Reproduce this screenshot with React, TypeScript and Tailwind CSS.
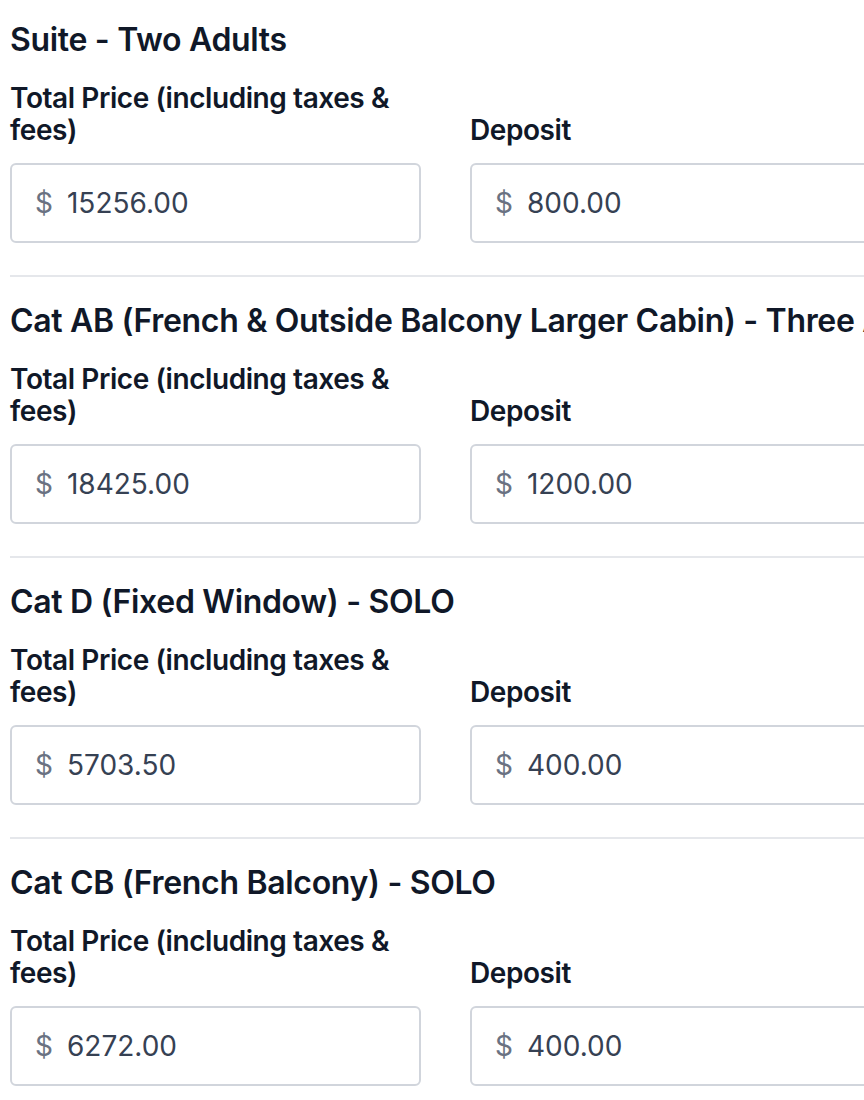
import React from 'react';

interface CabinPrice {
    id: string;
    title: string;
    total: string;
    deposit: string;
}

const cabins: CabinPrice[] = [
    { id: 'suite-two', title: 'Suite - Two Adults', total: '15256.00', deposit: '800.00' },
    { id: 'cat-ab-three', title: 'Cat AB (French & Outside Balcony Larger Cabin) - Three Adults', total: '18425.00', deposit: '1200.00' },
    { id: 'cat-d-solo', title: 'Cat D (Fixed Window) - SOLO', total: '5703.50', deposit: '400.00' },
    { id: 'cat-cb-solo', title: 'Cat CB (French Balcony) - SOLO', total: '6272.00', deposit: '400.00' },
];

const PriceField: React.FC<{ label: string; value: string }> = ({ label, value }) => (
    <div className="flex flex-col justify-end gap-[17px]">
        <label className="text-[28px] leading-[32px] font-semibold text-gray-900 tracking-[-0.015em]">
            {label}
        </label>
        <div className="h-[80px] flex items-center gap-[14px] px-[23px] border-2 border-gray-300 rounded-[6px] bg-white">
            <span className="text-[28px] text-gray-500">$</span>
            <input
                readOnly
                defaultValue={value}
                className="flex-1 min-w-0 bg-transparent outline-none text-[28px] text-gray-700"
            />
        </div>
    </div>
);

export default function App() {
    return (
        <div className="w-[864px] overflow-hidden bg-white font-['Inter','Liberation_Sans',sans-serif]">
            <div className="w-[900px] pl-[10px]">
                {cabins.map((cabin, idx) => (
                    <section
                        key={cabin.id}
                        className={`${idx === 0 ? 'pt-[20px]' : 'pt-[24px]'} pb-[32px] border-b-2 border-gray-200`}
                    >
                        <h3 className="text-[32px] leading-[40px] font-semibold text-gray-900 whitespace-nowrap tracking-[-0.01em]">
                            {cabin.title}
                        </h3>
                        {/* Price inputs */}
                        <div className="mt-[22px] grid grid-cols-[411px_411px] gap-x-[49px]">
                            <PriceField label="Total Price (including taxes & fees)" value={cabin.total} />
                            <PriceField label="Deposit" value={cabin.deposit} />
                        </div>
                    </section>
                ))}
            </div>
        </div>
    );
}
